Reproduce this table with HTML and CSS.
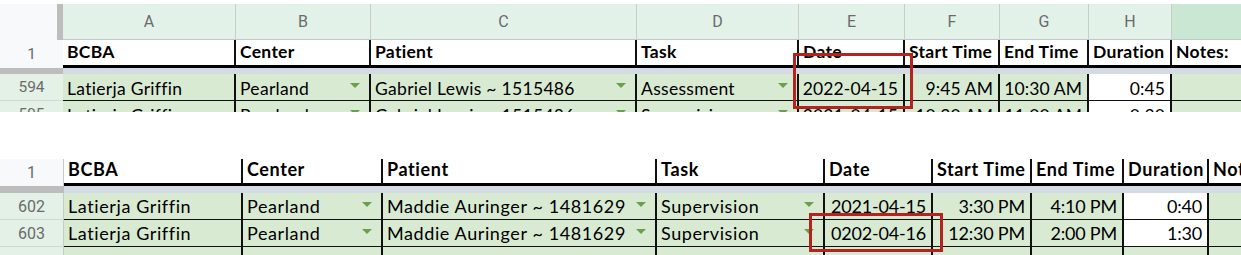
FILE: index.html
```html
<!DOCTYPE html>
<html lang="en">
<head>
  <meta charset="UTF-8">
  <title>Sessions - Sheet</title>
  <link rel="stylesheet" href="styles.css">
</head>

<body>

  <div class="sheet sheet-top">
    <div class="row letters">
      <div class="corner"></div>
      <div>A</div>
      <div>B</div>
      <div>C</div>
      <div>D</div>
      <div>E</div>
      <div>F</div>
      <div>G</div>
      <div>H</div>
      <div class="sel"></div>
    </div>

    <div class="row head">
      <div class="num">1</div>
      <div class="cell">BCBA</div>
      <div class="cell">Center</div>
      <div class="cell">Patient</div>
      <div class="cell">Task</div>
      <div class="cell">Date</div>
      <div class="cell">Start Time</div>
      <div class="cell">End Time</div>
      <div class="cell">Duration</div>
      <div class="cell last">Notes:</div>
    </div>

    <div class="row band">
      <div class="band-num"></div>
      <div class="band-fill"></div>
    </div>

    <div class="row data">
      <div class="num">594</div>
      <div class="cell">Latierja Griffin</div>
      <div class="cell dd">Pearland<span class="tri"></span></div>
      <div class="cell dd">Gabriel Lewis ~ 1515486<span class="tri"></span></div>
      <div class="cell dd">Assessment<span class="tri"></span></div>
      <div class="cell right">2022-04-15</div>
      <div class="cell right">9:45 AM</div>
      <div class="cell right">10:30 AM</div>
      <div class="cell right blank">0:45</div>
      <div class="cell last"></div>
    </div>

    <div class="row data">
      <div class="num">595</div>
      <div class="cell">Latierja Griffin</div>
      <div class="cell dd">Pearland<span class="tri"></span></div>
      <div class="cell dd">Gabriel Lewis ~ 1515486<span class="tri"></span></div>
      <div class="cell dd">Supervision<span class="tri"></span></div>
      <div class="cell right">2021-04-15</div>
      <div class="cell right">10:30 AM</div>
      <div class="cell right">11:00 AM</div>
      <div class="cell right blank">0:30</div>
      <div class="cell last"></div>
    </div>

    <div class="mark mark-top"></div>
  </div>

  <div class="sheet sheet-bottom">
    <div class="row head">
      <div class="num">1</div>
      <div class="cell">BCBA</div>
      <div class="cell">Center</div>
      <div class="cell">Patient</div>
      <div class="cell">Task</div>
      <div class="cell">Date</div>
      <div class="cell">Start Time</div>
      <div class="cell">End Time</div>
      <div class="cell">Duration</div>
      <div class="cell last">Notes:</div>
    </div>

    <div class="row band">
      <div class="band-num"></div>
      <div class="band-fill"></div>
    </div>

    <div class="row data">
      <div class="num">602</div>
      <div class="cell">Latierja Griffin</div>
      <div class="cell dd">Pearland<span class="tri"></span></div>
      <div class="cell dd">Maddie Auringer ~ 1481629<span class="tri"></span></div>
      <div class="cell dd">Supervision<span class="tri"></span></div>
      <div class="cell right">2021-04-15</div>
      <div class="cell right">3:30 PM</div>
      <div class="cell right">4:10 PM</div>
      <div class="cell right blank">0:40</div>
      <div class="cell last"></div>
    </div>

    <div class="row data">
      <div class="num">603</div>
      <div class="cell">Latierja Griffin</div>
      <div class="cell dd">Pearland<span class="tri"></span></div>
      <div class="cell dd">Maddie Auringer ~ 1481629<span class="tri"></span></div>
      <div class="cell dd">Supervision<span class="tri"></span></div>
      <div class="cell right">0202-04-16</div>
      <div class="cell right">12:30 PM</div>
      <div class="cell right">2:00 PM</div>
      <div class="cell right blank">1:30</div>
      <div class="cell last"></div>
    </div>

    <div class="row data">
      <div class="num"></div>
      <div class="cell"></div>
      <div class="cell"></div>
      <div class="cell"></div>
      <div class="cell"></div>
      <div class="cell"></div>
      <div class="cell"></div>
      <div class="cell"></div>
      <div class="cell"></div>
      <div class="cell last"></div>
    </div>

    <div class="mark mark-bottom"></div>
  </div>

</body>
</html>
```

FILE: styles.css
```css
* {
  box-sizing: border-box;
}

body {
  margin: 0;
  background-color: #fff;
  font-family: Lato, 'Liberation Sans', sans-serif;
  color: #000;
}

.sheet {
  position: relative;
  overflow: hidden;
}

.sheet-top {
  margin-top: 4px;
  height: 108px;
  font-size: 17.5px;
  letter-spacing: 0.3px;
}

.sheet-bottom {
  margin-top: 47px;
  height: 96px;
  font-size: 18px;
  letter-spacing: 0.6px;
}

.row {
  display: grid;
}

.sheet-top .row {
  grid-template-columns: 63px 173px 135px 266px 162px 106px 95px 89px 83px 69px;
}

.sheet-bottom .row {
  grid-template-columns: 64px 179px 140px 274px 168px 108px 99px 92px 85px 32px;
}

/* column letters */
.letters {
  height: 36px;
  background-color: #e3f2e8;
}

.letters div {
  display: flex;
  align-items: center;
  justify-content: center;
  border-right: 1px solid #c9cdca;
  border-bottom: 1px solid #c4c7c5;
  font-family: Roboto, sans-serif;
  font-size: 16px;
  letter-spacing: 0;
  color: #6b6b6b;
}

.letters .corner {
  background-color: #f8f9fa;
  border-right: 6px solid #bdbdbd;
  border-bottom: none;
}

.letters .sel {
  background-color: #c9e7d3;
  border-right: none;
}

/* cells */
.cell {
  display: flex;
  align-items: flex-end;
  padding: 0 4px 0 4px;
  border-right: 2px solid #111;
  white-space: nowrap;
  overflow: hidden;
}

.cell.last {
  border-right: none;
  padding-right: 0;
}

.cell.right {
  justify-content: flex-end;
  padding-right: 5px;
  letter-spacing: 0.1px;
}

.sheet-bottom .cell.right {
  letter-spacing: -0.2px;
}

.cell.dd {
  justify-content: space-between;
}

.tri {
  width: 0;
  height: 0;
  margin-right: 5px;
  align-self: center;
  margin-bottom: 2px;
  border-left: 5px solid transparent;
  border-right: 5px solid transparent;
  border-top: 5px solid #6a9f4e;
}

.num {
  display: flex;
  align-items: center;
  justify-content: center;
  font-family: Roboto, sans-serif;
  font-size: 15.5px;
  letter-spacing: 0;
  color: #6b6b6b;
}

/* header row */
.head {
  height: 28px;
}

.sheet-bottom .head {
  height: 27px;
}

.head .num {
  background-color: #f8f9fa;
}

.head .cell {
  background-color: #fff;
  border-bottom: 3px solid #000;
  font-weight: bold;
  padding-bottom: 3px;
}

.sheet-bottom .head .num {
  border-right: 1px solid #c6cbc8;
  font-size: 16px;
}

/* frozen divider */
.band {
  height: 6px;
}

.sheet-bottom .band {
  height: 7px;
}

.band-num {
  background-color: #bdbdbd;
}

.band-fill {
  grid-column: 2 / -1;
  background-color: #d5dbe5;
}

/* data rows */
.data {
  height: 27px;
}

.data .num {
  background-color: #e3f1e6;
  border-bottom: 1px solid #cfd8d1;
}

.sheet-bottom .data .num {
  border-right: 1px solid #c6cbc8;
  font-size: 16px;
}

.data .cell {
  background-color: #d9ead3;
  border-bottom: 1px solid #111;
  padding-bottom: 1px;
}

.sheet-bottom .data .cell {
  padding-bottom: 2px;
}

.data .cell.blank {
  background-color: #fff;
}

/* red annotation boxes */
.mark {
  position: absolute;
  border: 3px solid #b5231e;
}

.mark-top {
  left: 793px;
  top: 49px;
  width: 120px;
  height: 56px;
}

.mark-bottom {
  left: 809px;
  top: 54px;
  width: 134px;
  height: 39px;
}
```
